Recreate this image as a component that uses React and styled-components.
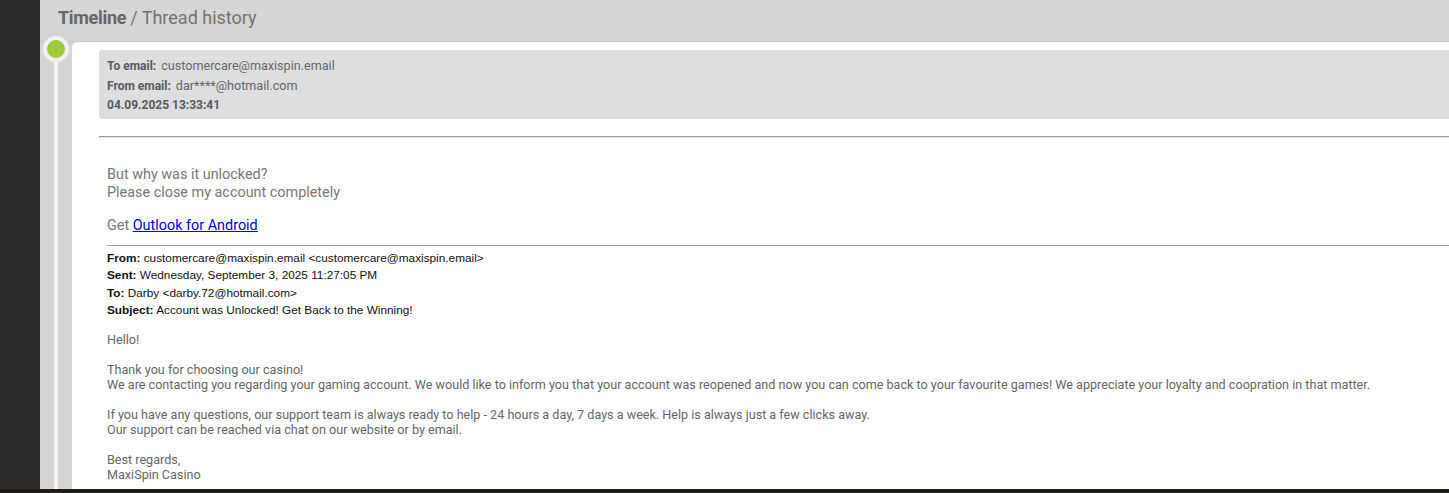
import React from 'react';
import styled, { createGlobalStyle } from 'styled-components';

const GlobalStyle = createGlobalStyle`
    html, body {
        margin: 0;
        padding: 0;
        background: #2b2b2b;
        overflow: hidden;
    }
    * {
        box-sizing: border-box;
    }
`;

const Page = styled.div`
    display: flex;
    flex-direction: column;
    width: 1449px;
    height: 493px;
    overflow: hidden;
`;

const Row = styled.div`
    display: flex;
    height: 489px;
`;

const Sidebar = styled.div`
    width: 40px;
    flex-shrink: 0;
    background: #2b2b2b;
`;

const BottomBar = styled.div`
    height: 4px;
    background: #1f1b17;
`;

const Main = styled.div`
    flex: 1;
    display: flex;
    flex-direction: column;
    background: #d6d6d6;
    font-family: Roboto, "Liberation Sans", sans-serif;
`;

const Header = styled.div`
    height: 42px;
    padding: 7px 0 0 18px;
    border-bottom: 1px solid #c9c9c9;
    font-size: 18px;
    color: #727272;
    flex-shrink: 0;
`;

const Strong = styled.b`
    font-weight: 700;
    color: #666;
    letter-spacing: -0.3px;
    margin-right: 4px;
`;

const Timeline = styled.div`
    flex: 1;
    display: flex;
    min-height: 0;
`;

const Rail = styled.div`
    width: 32px;
    flex-shrink: 0;
    display: flex;
    flex-direction: column;
    align-items: center;
`;

const Dot = styled.div`
    width: 26px;
    height: 26px;
    margin-top: -6px;
    border-radius: 50%;
    background: #9fcb3a;
    border: 4px solid #f2f2f2;
    position: relative;
    z-index: 1;
    flex-shrink: 0;
`;

const Line = styled.div`
    flex: 1;
    width: 4px;
    margin-top: -2px;
    background: #f2f2f2;
`;

const Card = styled.div`
    flex: 1;
    background: #fff;
    border-radius: 6px 0 0 0;
    padding: 8px 0 0 27px;
    overflow: hidden;
`;

const InfoBox = styled.div`
    background: #dddedf;
    border-radius: 4px 0 0 4px;
    padding: 6px 8px 0;
    height: 69px;
    color: #666;
`;

const InfoRow = styled.div`
    font-size: 12.6px;
    line-height: ${p => p.$lh || 19}px;
`;

const Label = styled.span`
    font-weight: 700;
    font-size: 12px;
    color: #5a5a5a;
    margin-right: 5px;
`;

const Divider = styled.div`
    margin-top: 17px;
    border-top: 1px solid #9a9a9a;
    border-bottom: 1px solid #e8e8e8;
`;

const Message = styled.div`
    padding: 28px 0 0 8px;
    color: #777;
`;

const Reply = styled.div`
    font-size: 14.4px;
    line-height: 18px;
`;

const Gap = styled.div`
    height: ${p => p.$h}px;
`;

const Link = styled.a`
    color: #0000ee;
    text-decoration: underline;
`;

const OutlookRule = styled.div`
    margin-top: 10px;
    border-top: 1px solid #a0a0a0;
    padding-top: 4px;
`;

const QuoteHead = styled.div`
    font-family: "Liberation Sans", Arial, sans-serif;
    font-size: 11.8px;
    line-height: 17.4px;
    color: #111;
`;

const Body = styled.div`
    margin-top: 12px;
    font-size: 12.6px;
    line-height: 15px;
    color: #666;
`;

const Para = styled.p`
    margin: 0 0 15px;
`;

export default function App() {
    return (
        <>
            <GlobalStyle />
            <Page>
                <Row>
                    <Sidebar />
                    <Main>
                        <Header>
                            <Strong>Timeline</Strong>/ Thread history
                        </Header>
                        <Timeline>
                            <Rail>
                                <Dot />
                                <Line />
                            </Rail>
                            <Card>
                                <InfoBox>
                                    <InfoRow><Label>To email:</Label>customercare@maxispin.email</InfoRow>
                                    <InfoRow><Label>From email:</Label>dar****@hotmail.com</InfoRow>
                                    <InfoRow $lh={17}><Label>04.09.2025 13:33:41</Label></InfoRow>
                                </InfoBox>
                                <Divider />
                                <Message>
                                    <Reply>But why was it unlocked?</Reply>
                                    <Reply>Please close my account completely</Reply>
                                    <Gap $h={15} />
                                    <Reply>Get <Link href="#">Outlook for Android</Link></Reply>
                                    <OutlookRule>
                                        <QuoteHead><b>From:</b> customercare@maxispin.email &lt;customercare@maxispin.email&gt;</QuoteHead>
                                        <QuoteHead><b>Sent:</b> Wednesday, September 3, 2025 11:27:05 PM</QuoteHead>
                                        <QuoteHead><b>To:</b> Darby &lt;darby.72@hotmail.com&gt;</QuoteHead>
                                        <QuoteHead><b>Subject:</b> Account was Unlocked! Get Back to the Winning!</QuoteHead>
                                    </OutlookRule>
                                    <Body>
                                        <Para>Hello!</Para>
                                        <Para>
                                            Thank you for choosing our casino!<br />
                                            We are contacting you regarding your gaming account. We would like to inform you that your account was reopened and now you can come back to your favourite games! We appreciate your loyalty and coopration in that matter.
                                        </Para>
                                        <Para>
                                            If you have any questions, our support team is always ready to help - 24 hours a day, 7 days a week. Help is always just a few clicks away.<br />
                                            Our support can be reached via chat on our website or by email.
                                        </Para>
                                        <Para>
                                            Best regards,<br />
                                            MaxiSpin Casino
                                        </Para>
                                    </Body>
                                </Message>
                            </Card>
                        </Timeline>
                    </Main>
                </Row>
                <BottomBar />
            </Page>
        </>
    );
}
